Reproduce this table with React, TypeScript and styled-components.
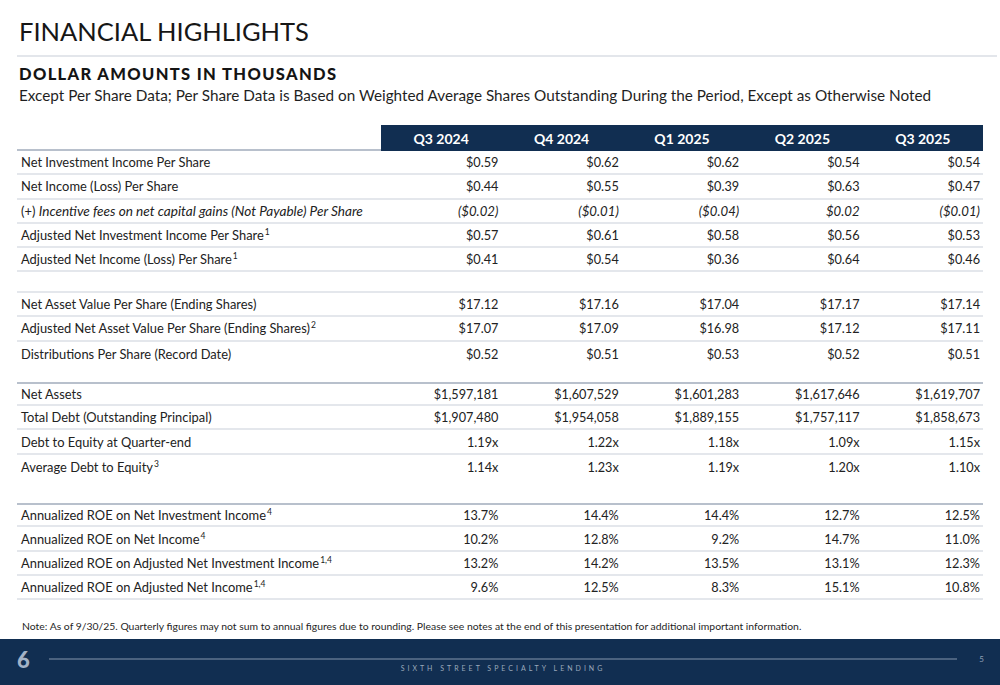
import React from 'react';
import styled, { createGlobalStyle } from 'styled-components';

const GlobalStyle = createGlobalStyle`
  html, body {
    margin: 0;
    padding: 0;
    background: #ffffff;
  }
  body {
    font-family: Lato, "Liberation Sans", sans-serif;
    color: #1f1f1f;
  }
`;

const NAVY = '#112e51';

const Slide = styled.div`
  width: 1000px;
  height: 685px;
  display: flex;
  flex-direction: column;
  overflow: hidden;
`;

const Content = styled.div`
  flex: 1;
  padding: 16px 3px 0 17px;
  display: flex;
  flex-direction: column;
`;

const Title = styled.h1`
  margin: 0 0 9px 2px;
  font-size: 25.5px;
  line-height: 30px;
  font-weight: 400;
  color: #161616;
`;

const Divider = styled.div`
  height: 2px;
  background: #e3e6eb;
`;

const Heading = styled.h2`
  margin: 7px 0 2px 2px;
  font-size: 16.5px;
  line-height: 20px;
  font-weight: 900;
  letter-spacing: 1.35px;
  color: #141414;
`;

const Subtitle = styled.p`
  margin: 0 0 21px 2px;
  font-size: 15.3px;
  line-height: 18px;
  color: #1f1f1f;
`;

const Table = styled.div`
  width: 966px;
  display: flex;
  flex-direction: column;
`;

const Row = styled.div<{ $line?: 'light' | 'none'; $topDark?: boolean }>`
  display: grid;
  grid-template-columns: 364px repeat(5, 1fr);
  height: 24.3px;
  align-items: center;
  box-sizing: border-box;
  border-bottom: ${p => (p.$line === 'none' ? '0' : '2px solid #e4e7ec')};
  border-top: ${p => (p.$topDark ? '2px solid #b8c0cc' : '0')};
  color: #222222;
`;

const Spacer = styled.div<{ $h: number; $line?: boolean }>`
  height: ${p => p.$h}px;
  box-sizing: border-box;
  border-bottom: ${p => (p.$line ? '2px solid #e4e7ec' : '0')};
`;

const HeaderRow = styled.div`
  display: grid;
  grid-template-columns: 364px repeat(5, 1fr);
  height: 26px;
`;

const HeaderBlank = styled.div`
  box-sizing: border-box;
  border-bottom: 2px solid #b8c0cc;
`;

const HeaderCell = styled.div`
  background: ${NAVY};
  color: #ffffff;
  font-weight: 700;
  font-size: 14px;
  display: flex;
  align-items: center;
  justify-content: center;
`;

const Label = styled.div`
  padding-left: 4px;
  font-size: 12.9px;
  white-space: nowrap;
  em {
    font-style: italic;
    font-size: 13.6px;
  }
`;

const Value = styled.div<{ $italic?: boolean }>`
  text-align: right;
  padding-right: 3px;
  font-size: ${p => (p.$italic ? '13.2px' : '12.7px')};
  font-style: ${p => (p.$italic ? 'italic' : 'normal')};
`;

const Sup = styled.sup`
  font-size: 8.5px;
  line-height: 0;
  vertical-align: 5px;
  margin-left: 1px;
`;

const Note = styled.p`
  margin: 19px 0 0 5px;
  font-size: 10.4px;
  line-height: 14px;
  color: #1f1f1f;
`;

const Footer = styled.footer`
  height: 46px;
  background: ${NAVY};
  display: flex;
  align-items: flex-start;
  padding: 0 16px 0 17px;
`;

const Logo = styled.div`
  font-size: 22px;
  font-weight: 900;
  line-height: 24px;
  margin-top: 9px;
  color: #a3b2c6;
  width: 32px;
`;

const FooterMiddle = styled.div`
  flex: 1;
  display: flex;
  flex-direction: column;
  align-items: center;
  padding-top: 19px;
`;

const FooterRule = styled.div`
  align-self: stretch;
  height: 2px;
  background: #4b627f;
`;

const Brand = styled.div`
  margin-top: 4px;
  font-size: 7px;
  line-height: 9px;
  letter-spacing: 3px;
  color: #9aa9bb;
`;

const PageNo = styled.div`
  width: 27px;
  text-align: right;
  font-size: 8px;
  line-height: 10px;
  padding-top: 15px;
  color: #8fa0b6;
`;

type RowData = {
  label: React.ReactNode;
  values: string[];
  italic?: boolean;
  line?: 'light' | 'none';
  topDark?: boolean;
};

const quarters = ['Q3 2024', 'Q4 2024', 'Q1 2025', 'Q2 2025', 'Q3 2025'];

const perShare: RowData[] = [
  { label: 'Net Investment Income Per Share', values: ['$0.59', '$0.62', '$0.62', '$0.54', '$0.54'] },
  { label: 'Net Income (Loss) Per Share', values: ['$0.44', '$0.55', '$0.39', '$0.63', '$0.47'] },
  {
    label: <>(+) <em>Incentive fees on net capital gains (Not Payable) Per Share</em></>,
    values: ['($0.02)', '($0.01)', '($0.04)', '$0.02', '($0.01)'],
    italic: true,
  },
  { label: <>Adjusted Net Investment Income Per Share<Sup>1</Sup></>, values: ['$0.57', '$0.61', '$0.58', '$0.56', '$0.53'] },
  { label: <>Adjusted Net Income (Loss) Per Share<Sup>1</Sup></>, values: ['$0.41', '$0.54', '$0.36', '$0.64', '$0.46'] },
];

const navRows: RowData[] = [
  { label: 'Net Asset Value Per Share (Ending Shares)', values: ['$17.12', '$17.16', '$17.04', '$17.17', '$17.14'] },
  { label: <>Adjusted Net Asset Value Per Share (Ending Shares)<Sup>2</Sup></>, values: ['$17.07', '$17.09', '$16.98', '$17.12', '$17.11'] },
  { label: 'Distributions Per Share (Record Date)', values: ['$0.52', '$0.51', '$0.53', '$0.52', '$0.51'], line: 'none' },
];

const balanceRows: RowData[] = [
  { label: 'Net Assets', values: ['$1,597,181', '$1,607,529', '$1,601,283', '$1,617,646', '$1,619,707'], topDark: true },
  { label: 'Total Debt (Outstanding Principal)', values: ['$1,907,480', '$1,954,058', '$1,889,155', '$1,757,117', '$1,858,673'] },
  { label: 'Debt to Equity at Quarter-end', values: ['1.19x', '1.22x', '1.18x', '1.09x', '1.15x'] },
  { label: <>Average Debt to Equity<Sup>3</Sup></>, values: ['1.14x', '1.23x', '1.19x', '1.20x', '1.10x'], line: 'none' },
];

const roeRows: RowData[] = [
  { label: <>Annualized ROE on Net Investment Income<Sup>4</Sup></>, values: ['13.7%', '14.4%', '14.4%', '12.7%', '12.5%'], topDark: true },
  { label: <>Annualized ROE on Net Income<Sup>4</Sup></>, values: ['10.2%', '12.8%', '9.2%', '14.7%', '11.0%'] },
  { label: <>Annualized ROE on Adjusted Net Investment Income<Sup>1,4</Sup></>, values: ['13.2%', '14.2%', '13.5%', '13.1%', '12.3%'] },
  { label: <>Annualized ROE on Adjusted Net Income<Sup>1,4</Sup></>, values: ['9.6%', '12.5%', '8.3%', '15.1%', '10.8%'] },
];

const DataRows: React.FC<{ rows: RowData[] }> = ({ rows }) => (
  <>
    {rows.map((r, i) => (
      <Row key={i} $line={r.line} $topDark={r.topDark}>
        <Label>{r.label}</Label>
        {r.values.map((v, j) => (
          <Value key={j} $italic={r.italic}>{v}</Value>
        ))}
      </Row>
    ))}
  </>
);

const App: React.FC = () => {
  return (
    <>
      <GlobalStyle />
      <Slide>
        <Content>
          <Title>FINANCIAL HIGHLIGHTS</Title>
          <Divider />
          <Heading>DOLLAR AMOUNTS IN THOUSANDS</Heading>
          <Subtitle>
            Except Per Share Data; Per Share Data is Based on Weighted Average Shares Outstanding During the Period, Except as Otherwise Noted
          </Subtitle>
          <Table>
            <HeaderRow>
              <HeaderBlank />
              {quarters.map(q => (
                <HeaderCell key={q}>{q}</HeaderCell>
              ))}
            </HeaderRow>
            <DataRows rows={perShare} />
            <Spacer $h={20.5} $line />
            <DataRows rows={navRows} />
            <Spacer $h={16} />
            <DataRows rows={balanceRows} />
            <Spacer $h={24} />
            <DataRows rows={roeRows} />
          </Table>
          <Note>
            Note: As of 9/30/25. Quarterly figures may not sum to annual figures due to rounding. Please see notes at the end of this presentation for additional important information.
          </Note>
        </Content>
        <Footer>
          <Logo>6</Logo>
          <FooterMiddle>
            <FooterRule />
            <Brand>SIXTH STREET SPECIALTY LENDING</Brand>
          </FooterMiddle>
          <PageNo>5</PageNo>
        </Footer>
      </Slide>
    </>
  );
};

export default App;
